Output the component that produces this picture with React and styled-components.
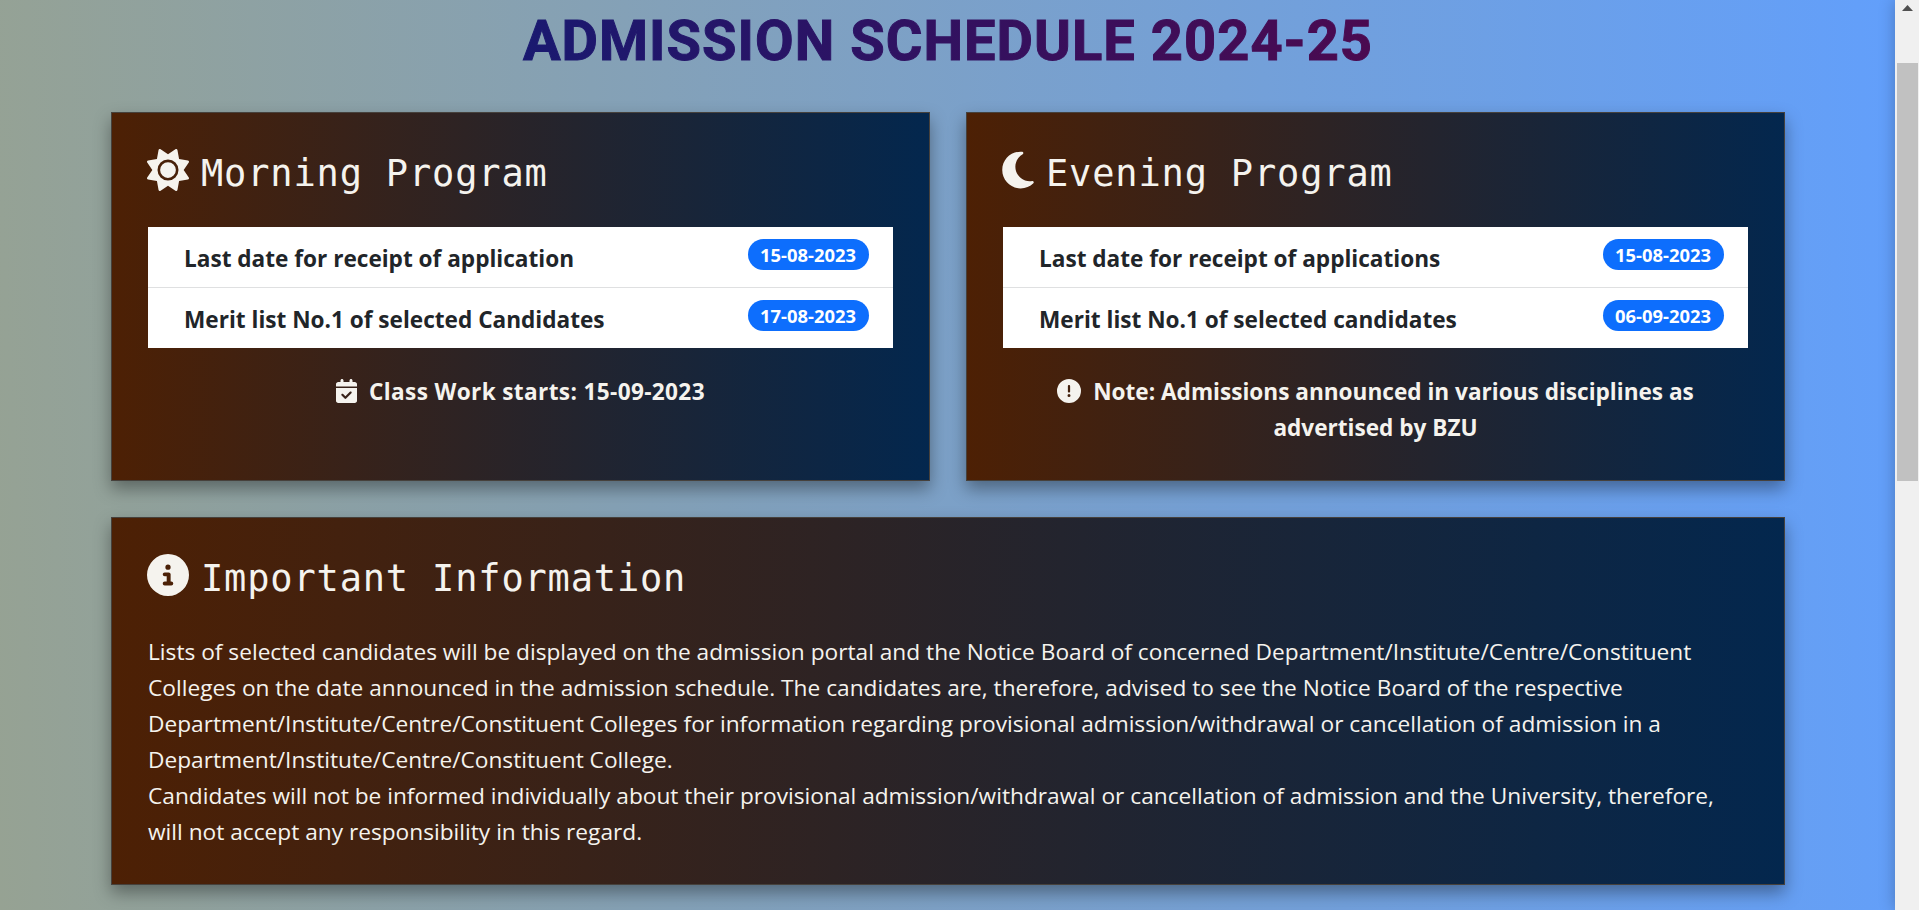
import React from "react";
import styled, { createGlobalStyle } from "styled-components";
import {
  FaSun,
  FaMoon,
  FaCalendarCheck,
  FaCircleExclamation,
  FaCircleInfo,
} from "react-icons/fa6";

const GlobalStyle = createGlobalStyle`
  *, *::before, *::after { box-sizing: border-box; }
  body {
    margin: 0;
    overflow: hidden;
    font-family: "Open Sans", "Noto Sans", sans-serif;
    color: #212529;
  }
`;

const Window = styled.div`
  display: flex;
  height: 910px;
`;

const Page = styled.main`
  flex: 1;
  min-width: 0;
  padding: 0 110px 0 111px;
  background: linear-gradient(87deg, #96a293 0%, #629ffb 100%);
  overflow: hidden;
`;

const Title = styled.h1`
  margin: 0 0 36px;
  padding-top: 5px;
  height: 76px;
  font: 700 56px/72px Roboto, Arial, sans-serif;
  letter-spacing: 1.05px;
  text-align: center;
  white-space: nowrap;
  color: transparent;
  -webkit-text-stroke: 1px transparent;
  background: linear-gradient(90deg, #191970 24%, #4b0a50 76%);
  background-clip: text;
`;

const Cards = styled.div`
  display: grid;
  grid-template-columns: 1fr 1fr;
  gap: 36px;
`;

const Card = styled.section`
  grid-column: ${(p) => (p.$wide ? "1 / -1" : "auto")};
  height: ${(p) => (p.$wide ? 368 : 369)}px;
  padding: 36px;
  border: 1px solid #46413c;
  background: linear-gradient(90deg, #4d2004 0%, #03274e 100%);
  box-shadow: 0 8px 16px rgba(0, 0, 0, 0.36);
  color: #f5f3ee;
`;

const CardTitle = styled.h2`
  display: flex;
  align-items: center;
  gap: 11px;
  margin: 0 0 ${(p) => p.$space}px -1px;
  height: 42px;
  font: 400 37px/42px "DejaVu Sans Mono", monospace;
  letter-spacing: 0.83px;
  white-space: pre;

  svg {
    flex: none;
    width: ${(p) => p.$icon}px;
    height: 42px;
    margin-top: -1px;
  }
`;

const TitleText = styled.span`
  padding: 8px 0 0 1px;
`;

const DateList = styled.ul`
  margin: 0;
  padding: 0;
  list-style: none;
  background: #fff;
  color: #212529;
`;

const DateRow = styled.li`
  display: flex;
  justify-content: space-between;
  height: 61px;
  padding: 12px 24px 12px 36px;
  border-bottom: 1px solid #dfe0e1;
  font-size: 22.6px;
  font-weight: 700;
  line-height: 40px;

  &:last-child {
    height: 60px;
    border-bottom: 0;
  }
`;

const Badge = styled.span`
  width: 121px;
  height: 31px;
  padding-right: 1px;
  border-radius: 16px;
  background: #0d6efd;
  color: #fff;
  font-size: 18.4px;
  line-height: 31px;
  text-align: center;
`;

const Note = styled.p`
  margin: 26px 0 0;
  font-size: 22.6px;
  font-weight: 700;
  line-height: 36px;
  letter-spacing: ${(p) => p.$spacing || 0}px;
  text-align: center;

  svg {
    width: ${(p) => p.$icon}px;
    height: 24px;
    margin-right: 12px;
    vertical-align: -3px;
  }
`;

const Info = styled.p`
  margin: 0;
  font-size: 22.7px;
  line-height: 36px;
  white-space: nowrap;
`;

const Scrollbar = styled.div`
  flex: none;
  width: 24px;
  padding: 0 1px 0 2px;
  background: #f0f0f0;
  box-shadow: 0 0 16px rgba(0, 0, 0, 0.25);
  z-index: 1;
`;

const Arrow = styled.div`
  height: 63px;
  padding: 5px 0 0 5px;

  svg {
    display: block;
  }
`;

const Thumb = styled.div`
  height: 418px;
  background: #c1c1c1;
`;

function Program({ icon, iconWidth, title, dates, children }) {
  return (
    <Card>
      <CardTitle $icon={iconWidth} $space={36}>
        {icon}
        <TitleText>{title}</TitleText>
      </CardTitle>
      <DateList>
        {dates.map(([label, date]) => (
          <DateRow key={label}>
            <span>{label}</span>
            <Badge>{date}</Badge>
          </DateRow>
        ))}
      </DateList>
      {children}
    </Card>
  );
}

export default function App() {
  return (
    <Window>
      <GlobalStyle />
      <Page>
        <Title>ADMISSION SCHEDULE 2024-25</Title>
        <Cards>
          <Program
            icon={<FaSun />}
            iconWidth={42}
            title="Morning Program"
            dates={[
              ["Last date for receipt of application", "15-08-2023"],
              ["Merit list No.1 of selected Candidates", "17-08-2023"],
            ]}
          >
            <Note $icon={21} $spacing={0.36}>
              <FaCalendarCheck />
              Class Work starts: 15-09-2023
            </Note>
          </Program>
          <Program
            icon={<FaMoon />}
            iconWidth={32}
            title="Evening Program"
            dates={[
              ["Last date for receipt of applications", "15-08-2023"],
              ["Merit list No.1 of selected candidates", "06-09-2023"],
            ]}
          >
            <Note $icon={24}>
              <FaCircleExclamation />
              Note: Admissions announced in various disciplines as
              <br />
              advertised by BZU
            </Note>
          </Program>
          <Card $wide>
            <CardTitle $icon={42} $space={38}>
              <FaCircleInfo />
              <TitleText>Important Information</TitleText>
            </CardTitle>
            <Info>
              Lists of selected candidates will be displayed on the admission portal and the Notice Board of concerned Department/Institute/Centre/Constituent
              <br />
              Colleges on the date announced in the admission schedule. The candidates are, therefore, advised to see the Notice Board of the respective
              <br />
              Department/Institute/Centre/Constituent Colleges for information regarding provisional admission/withdrawal or cancellation of admission in a
              <br />
              Department/Institute/Centre/Constituent College.
              <br />
              Candidates will not be informed individually about their provisional admission/withdrawal or cancellation of admission and the University, therefore,
              <br />
              will not accept any responsibility in this regard.
            </Info>
          </Card>
        </Cards>
      </Page>
      <Scrollbar>
        <Arrow>
          <svg width="11" height="6" viewBox="0 0 11 6">
            <path d="M5.5 0L11 6H0Z" fill="#505050" />
          </svg>
        </Arrow>
        <Thumb />
      </Scrollbar>
    </Window>
  );
}
